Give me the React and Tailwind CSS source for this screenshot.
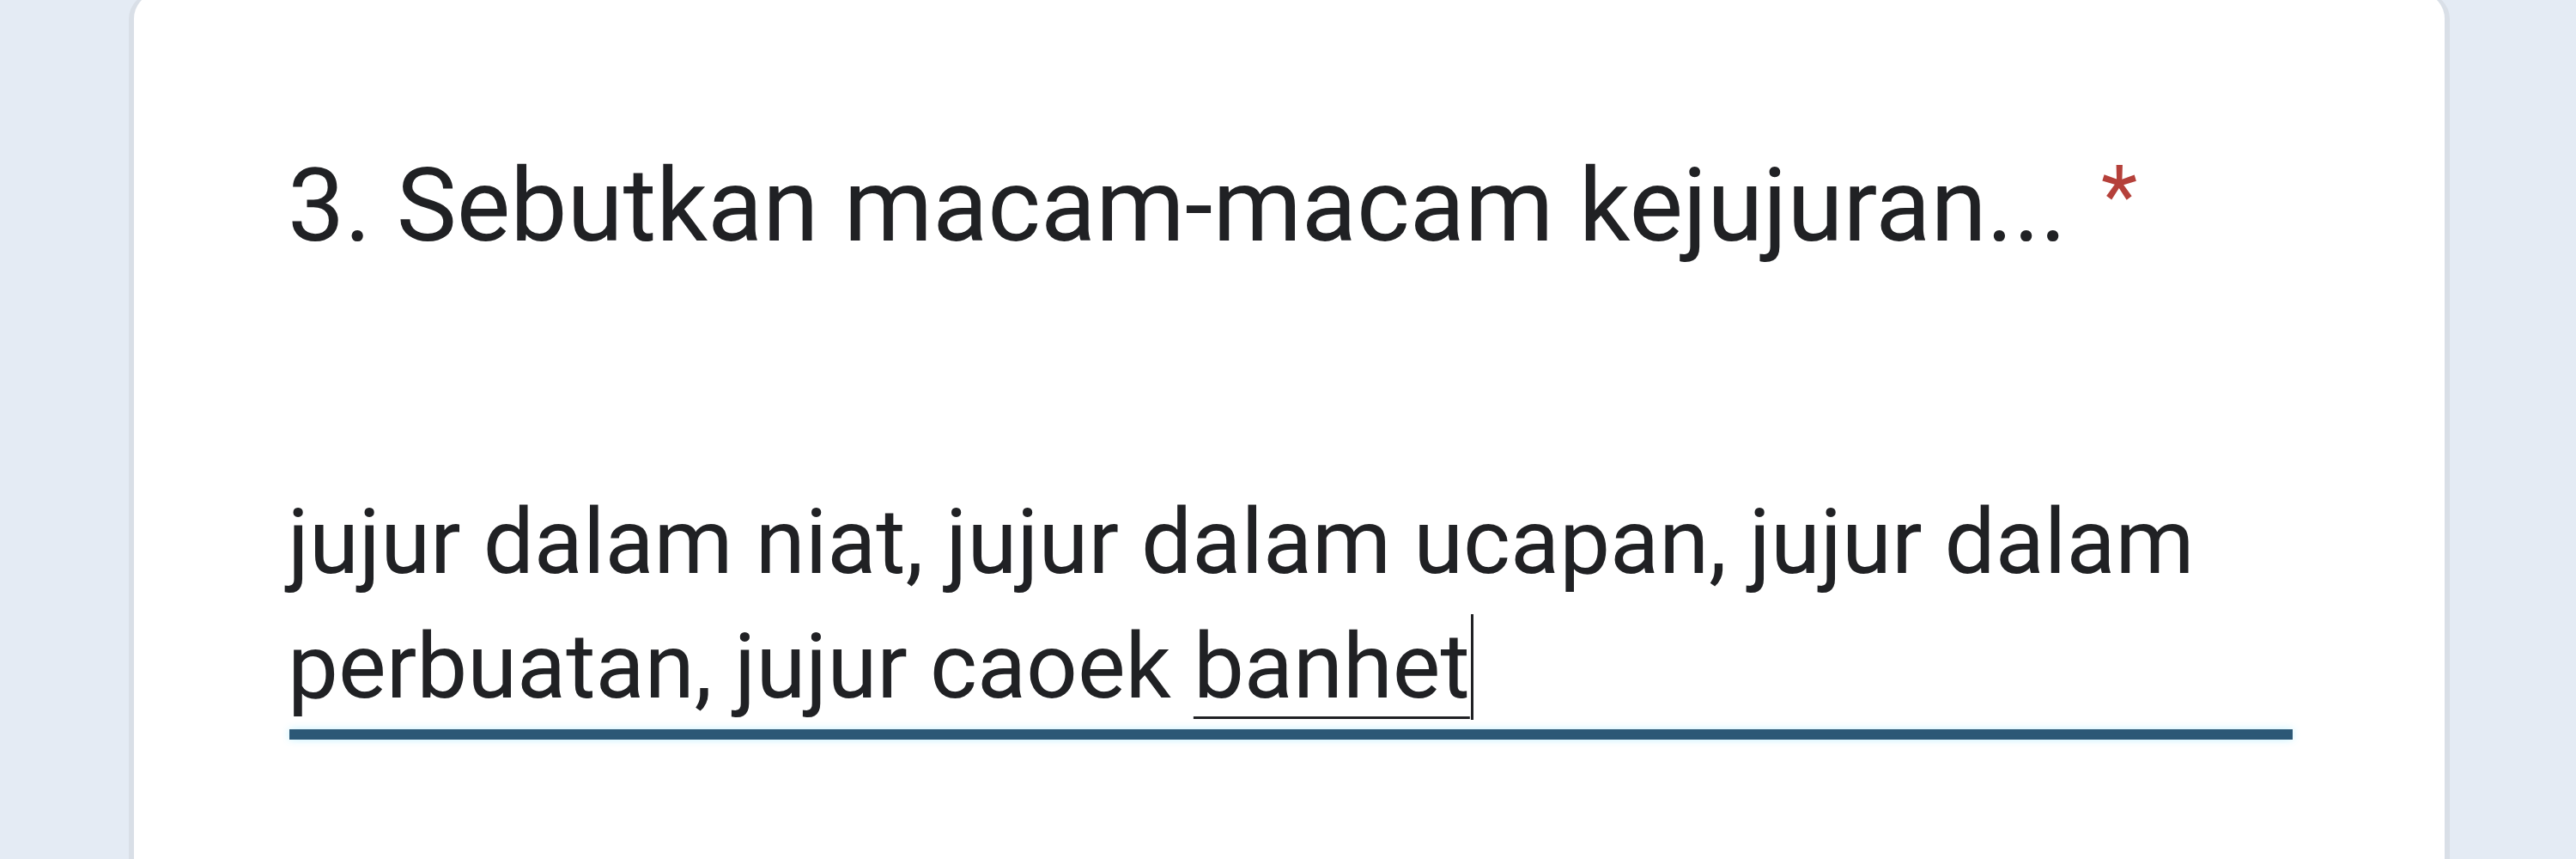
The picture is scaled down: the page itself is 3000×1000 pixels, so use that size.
export default function App() {
  return (
    <div className="w-[3000px] h-[1000px] overflow-hidden bg-[#e4ebf4] pl-[150px] pr-[147px]">
      <div className="-mt-[8px] h-[1100px] rounded-t-[30px] border-x-[6px] border-t-[2px] border-[#d9dfe7] bg-white pl-[179px] pr-[177px] pt-[188px] text-[#202124]">
        <div className="flex items-start leading-none" style={{ fontFamily: "Roboto, 'Noto Sans', sans-serif" }}>
          <span className="text-[118px] leading-[117px]">3. Sebutkan macam-macam kejujuran...</span>
          <span className="ml-[40px] mt-[-3px] text-[98px] leading-[100px] text-[#b5403a]">*</span>
        </div>
        <div className="mt-[260px]" style={{ fontFamily: "Roboto, 'Noto Sans', sans-serif" }}>
          <div className="text-[105px] leading-[145px]">
            <div>jujur dalam niat, jujur dalam ucapan, jujur dalam</div>
            <div>
              perbuatan, jujur caoek{" "}
              <span className="relative underline decoration-[3px] underline-offset-[22px] decoration-[#202124]">
                banhet
                <span className="absolute right-[-4px] top-0 bottom-0 w-[3px] bg-[#202124]" />
              </span>
            </div>
          </div>
          <div className="ml-[2px] h-[12px] bg-[#2c5876] shadow-[0_0_10px_rgba(190,240,255,0.9)]" />
        </div>
      </div>
    </div>
  );
}
